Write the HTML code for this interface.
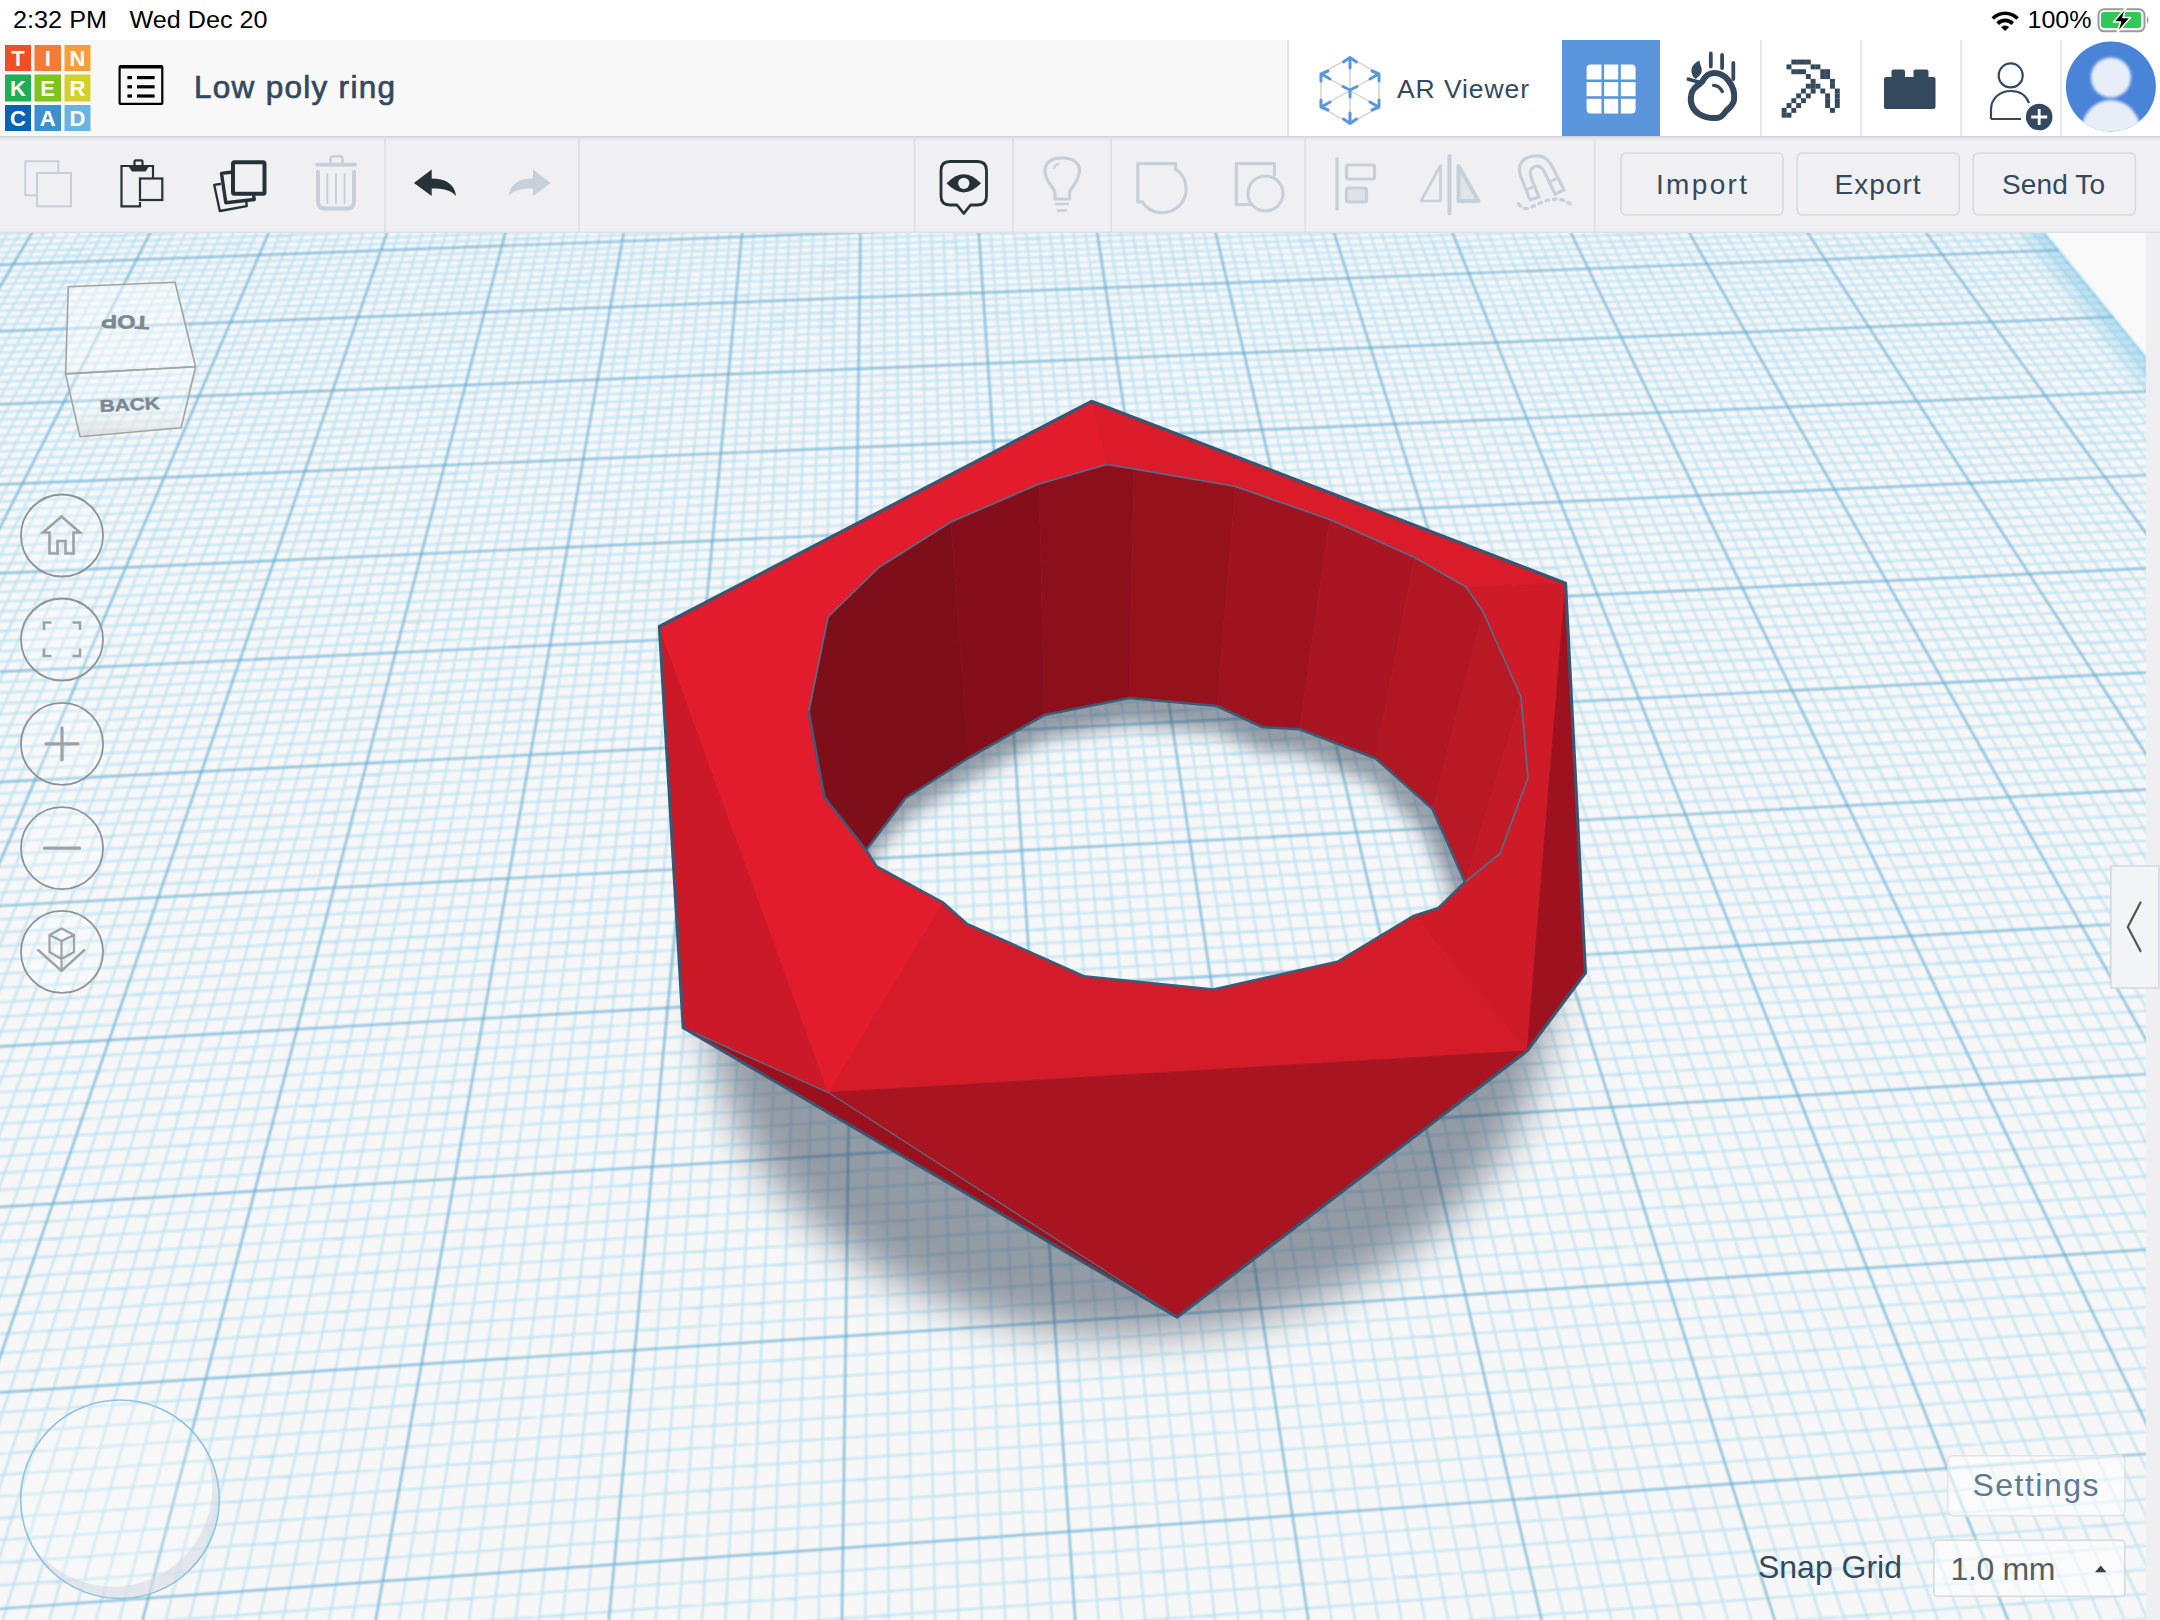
<!DOCTYPE html>
<html><head><meta charset="utf-8">
<style>
*{box-sizing:border-box;margin:0;padding:0}
html,body{width:2160px;height:1620px;overflow:hidden;background:#fff;font-family:"Liberation Sans",sans-serif}
svg{position:absolute;left:0;top:0}
</style></head><body>
<svg id="scene" width="2160" height="1620" viewBox="0 0 2160 1620">
 <defs>
  <clipPath id="vp"><rect x="0" y="233" width="2146" height="1387"/></clipPath>
  <filter id="blurO" x="-30%" y="-30%" width="160%" height="160%"><feGaussianBlur stdDeviation="20"/></filter>
  <filter id="blurI" x="-30%" y="-30%" width="160%" height="160%"><feGaussianBlur stdDeviation="9"/></filter>
  <filter id="soft" filterUnits="userSpaceOnUse" x="0" y="233" width="2160" height="1387"><feGaussianBlur stdDeviation="1.0"/></filter>
  <mask id="shmask" maskUnits="userSpaceOnUse" x="0" y="233" width="2160" height="1387">
   <ellipse cx="1128" cy="1000" rx="420" ry="335" fill="#fff" filter="url(#blurO)"/>
   <path d="M872 856 L909.5 816 L968.3 780 L1044.5 739 L1129.2 724 L1216.7 732 L1262 751 L1299.5 753.2 L1373.8 782.5 L1422.5 831 L1451 890 L1440 1100 L880 1100Z" fill="#000" filter="url(#blurI)"/>
  </mask>
  <linearGradient id="band" gradientUnits="userSpaceOnUse" x1="2137.4" y1="391.7" x2="2173" y2="390.2">
   <stop offset="0" stop-color="#4fb3de" stop-opacity="0"/><stop offset="1" stop-color="#4fb3de" stop-opacity="0.4"/>
  </linearGradient>
 </defs>
 <g clip-path="url(#vp)">
  <rect x="0" y="233" width="2160" height="1387" fill="#f9f9f9"/>
  <polygon points="23.3,-179.4 1673.5,-223.1 3385.2,1878.8 -2105.5,2353.9" fill="#f7f7f7"/>
  <g filter="url(#soft)">
  <path d="M32 -179.7L-2073.9 2351.1M40.6 -179.9L-2042.3 2348.4M49.2 -180.1L-2010.7 2345.7M57.8 -180.3L-1979.2 2342.9M66.4 -180.6L-1947.8 2340.2M75 -180.8L-1916.4 2337.5M83.6 -181L-1885 2334.8M92.1 -181.2L-1853.7 2332.1M100.7 -181.5L-1822.4 2329.4M117.9 -181.9L-1760.1 2324M126.4 -182.2L-1728.9 2321.3M135 -182.4L-1697.9 2318.6M143.6 -182.6L-1666.8 2315.9M152.1 -182.8L-1635.9 2313.2M160.7 -183.1L-1604.9 2310.6M169.2 -183.3L-1574 2307.9M177.8 -183.5L-1543.2 2305.2M186.3 -183.7L-1512.4 2302.6M203.4 -184.2L-1451 2297.2M212 -184.4L-1420.3 2294.6M220.5 -184.6L-1389.7 2291.9M229 -184.9L-1359.2 2289.3M237.5 -185.1L-1328.7 2286.7M246 -185.3L-1298.2 2284M254.6 -185.5L-1267.8 2281.4M263.1 -185.8L-1237.4 2278.8M271.6 -186L-1207.1 2276.1M288.6 -186.4L-1146.6 2270.9M297.1 -186.7L-1116.4 2268.3M305.6 -186.9L-1086.2 2265.7M314.1 -187.1L-1056.1 2263.1M322.5 -187.3L-1026.1 2260.5M331 -187.6L-996 2257.9M339.5 -187.8L-966.1 2255.3M348 -188L-936.2 2252.7M356.5 -188.2L-906.3 2250.1M373.4 -188.7L-846.7 2245M381.8 -188.9L-816.9 2242.4M390.3 -189.1L-787.2 2239.8M398.7 -189.4L-757.6 2237.3M407.2 -189.6L-728 2234.7M415.6 -189.8L-698.4 2232.1M424.1 -190L-668.9 2229.6M432.5 -190.3L-639.4 2227M440.9 -190.5L-609.9 2224.5M457.8 -190.9L-551.2 2219.4M466.2 -191.1L-521.9 2216.9M474.6 -191.4L-492.6 2214.3M483.1 -191.6L-463.4 2211.8M491.5 -191.8L-434.2 2209.3M499.9 -192L-405.1 2206.8M508.3 -192.3L-376 2204.2M516.7 -192.5L-347 2201.7M525.1 -192.7L-318 2199.2M541.9 -193.1L-260.1 2194.2M550.2 -193.4L-231.2 2191.7M558.6 -193.6L-202.4 2189.2M567 -193.8L-173.6 2186.7M575.4 -194L-144.8 2184.2M583.8 -194.3L-116.1 2181.8M592.1 -194.5L-87.4 2179.3M600.5 -194.7L-58.8 2176.8M608.8 -194.9L-30.2 2174.3M625.6 -195.4L26.8 2169.4M633.9 -195.6L55.3 2166.9M642.3 -195.8L83.7 2164.5M650.6 -196L112.1 2162M658.9 -196.2L140.4 2159.6M667.3 -196.5L168.7 2157.1M675.6 -196.7L197 2154.7M683.9 -196.9L225.2 2152.2M692.2 -197.1L253.3 2149.8M708.9 -197.6L309.6 2144.9M717.2 -197.8L337.6 2142.5M725.5 -198L365.6 2140.1M733.8 -198.2L393.6 2137.7M742.1 -198.4L421.5 2135.2M750.4 -198.7L449.4 2132.8M758.7 -198.9L477.2 2130.4M767 -199.1L505.1 2128M775.3 -199.3L532.8 2125.6M791.9 -199.8L588.2 2120.8M800.1 -200L615.9 2118.4M808.4 -200.2L643.5 2116M816.7 -200.4L671.1 2113.7M824.9 -200.6L698.6 2111.3M833.2 -200.9L726.1 2108.9M841.5 -201.1L753.5 2106.5M849.7 -201.3L780.9 2104.1M858 -201.5L808.3 2101.8M874.5 -201.9L862.9 2097.1M882.7 -202.2L890.2 2094.7M891 -202.4L917.4 2092.3M899.2 -202.6L944.6 2090M907.4 -202.8L971.7 2087.6M915.6 -203L998.8 2085.3M923.9 -203.2L1025.9 2083M932.1 -203.5L1052.9 2080.6M940.3 -203.7L1079.9 2078.3M956.7 -204.1L1133.8 2073.6M964.9 -204.3L1160.6 2071.3M973.1 -204.6L1187.5 2069M981.3 -204.8L1214.3 2066.7M989.5 -205L1241 2064.3M997.7 -205.2L1267.7 2062M1005.9 -205.4L1294.4 2059.7M1014.1 -205.6L1321.1 2057.4M1022.3 -205.9L1347.7 2055.1M1038.6 -206.3L1400.8 2050.5M1046.8 -206.5L1427.3 2048.2M1055 -206.7L1453.7 2045.9M1063.1 -206.9L1480.2 2043.7M1071.3 -207.1L1506.5 2041.4M1079.5 -207.4L1532.9 2039.1M1087.6 -207.6L1559.2 2036.8M1095.8 -207.8L1585.5 2034.5M1103.9 -208L1611.7 2032.3M1120.2 -208.4L1664.1 2027.7M1128.3 -208.7L1690.2 2025.5M1136.5 -208.9L1716.3 2023.2M1144.6 -209.1L1742.3 2021M1152.7 -209.3L1768.4 2018.7M1160.8 -209.5L1794.3 2016.5M1169 -209.7L1820.3 2014.2M1177.1 -209.9L1846.2 2012M1185.2 -210.2L1872.1 2009.7M1201.4 -210.6L1923.7 2005.3M1209.5 -210.8L1949.5 2003M1217.6 -211L1975.2 2000.8M1225.7 -211.2L2000.9 1998.6M1233.8 -211.4L2026.6 1996.4M1241.9 -211.7L2052.2 1994.2M1250 -211.9L2077.8 1991.9M1258 -212.1L2103.3 1989.7M1266.1 -212.3L2128.8 1987.5M1282.3 -212.7L2179.8 1983.1M1290.3 -212.9L2205.2 1980.9M1298.4 -213.2L2230.6 1978.7M1306.4 -213.4L2255.9 1976.5M1314.5 -213.6L2281.2 1974.3M1322.6 -213.8L2306.5 1972.2M1330.6 -214L2331.7 1970M1338.7 -214.2L2356.9 1967.8M1346.7 -214.4L2382.1 1965.6M1362.8 -214.9L2432.3 1961.3M1370.8 -215.1L2457.4 1959.1M1378.8 -215.3L2482.4 1956.9M1386.9 -215.5L2507.4 1954.8M1394.9 -215.7L2532.4 1952.6M1402.9 -215.9L2557.3 1950.5M1410.9 -216.1L2582.2 1948.3M1418.9 -216.3L2607.1 1946.2M1426.9 -216.6L2631.9 1944M1442.9 -217L2681.5 1939.7M1450.9 -217.2L2706.2 1937.6M1458.9 -217.4L2730.9 1935.4M1466.9 -217.6L2755.6 1933.3M1474.9 -217.8L2780.2 1931.2M1482.9 -218L2804.8 1929.1M1490.9 -218.2L2829.3 1926.9M1498.9 -218.5L2853.9 1924.8M1506.8 -218.7L2878.4 1922.7M1522.8 -219.1L2927.3 1918.5M1530.7 -219.3L2951.7 1916.3M1538.7 -219.5L2976 1914.2M1546.7 -219.7L3000.3 1912.1M1554.6 -219.9L3024.6 1910M1562.6 -220.1L3048.9 1907.9M1570.5 -220.4L3073.1 1905.8M1578.5 -220.6L3097.3 1903.7M1586.4 -220.8L3121.5 1901.6M1602.3 -221.2L3169.7 1897.5M1610.2 -221.4L3193.8 1895.4M1618.1 -221.6L3217.8 1893.3M1626.1 -221.8L3241.9 1891.2M1634 -222L3265.8 1889.2M1641.9 -222.2L3289.8 1887.1M1649.8 -222.5L3313.7 1885M1657.7 -222.7L3337.6 1883M1665.6 -222.9L3361.4 1880.9M1673.5 -223.1L3385.2 1878.8M20.7 -176.3L1675.9 -220.2M18 -173.1L1678.3 -217.3M15.3 -169.9L1680.7 -214.3M12.6 -166.6L1683.1 -211.4M9.9 -163.4L1685.5 -208.4M7.1 -160.1L1688 -205.4M4.4 -156.8L1690.4 -202.4M1.6 -153.5L1692.9 -199.3M-1.2 -150.2L1695.4 -196.3M-6.9 -143.4L1700.4 -190.1M-9.7 -140.1L1702.9 -187M-12.6 -136.6L1705.4 -183.9M-15.5 -133.2L1708 -180.8M-18.4 -129.7L1710.6 -177.6M-21.3 -126.2L1713.2 -174.4M-24.3 -122.7L1715.8 -171.2M-27.3 -119.2L1718.4 -168M-30.2 -115.6L1721 -164.8M-36.3 -108.5L1726.4 -158.2M-39.3 -104.8L1729.1 -154.9M-42.4 -101.2L1731.8 -151.6M-45.5 -97.5L1734.5 -148.2M-48.6 -93.8L1737.2 -144.9M-51.7 -90.1L1740 -141.5M-54.9 -86.3L1742.8 -138.1M-58 -82.6L1745.6 -134.6M-61.2 -78.8L1748.4 -131.2M-67.7 -71.1L1754.1 -124.2M-71 -67.2L1756.9 -120.7M-74.2 -63.3L1759.8 -117.1M-77.5 -59.4L1762.7 -113.6M-80.9 -55.4L1765.7 -110M-84.2 -51.4L1768.6 -106.3M-87.6 -47.4L1771.6 -102.7M-91 -43.3L1774.6 -99M-94.4 -39.3L1777.6 -95.3M-101.3 -31L1783.6 -87.9M-104.8 -26.9L1786.7 -84.1M-108.4 -22.7L1789.8 -80.3M-111.9 -18.5L1792.9 -76.5M-115.5 -14.2L1796 -72.7M-119.1 -9.9L1799.2 -68.8M-122.7 -5.6L1802.4 -64.9M-126.4 -1.3L1805.6 -61M-130 3.1L1808.8 -57M-137.5 11.9L1815.3 -49M-141.2 16.4L1818.6 -45M-145 20.9L1821.9 -40.9M-148.8 25.5L1825.2 -36.8M-152.7 30L1828.6 -32.7M-156.6 34.7L1832 -28.5M-160.5 39.3L1835.4 -24.4M-164.4 44L1838.8 -20.2M-168.3 48.7L1842.3 -15.9M-176.4 58.2L1849.2 -7.3M-180.4 63L1852.8 -3M-184.5 67.9L1856.3 1.4M-188.6 72.8L1859.9 5.8M-192.8 77.7L1863.5 10.2M-196.9 82.7L1867.1 14.7M-201.2 87.7L1870.8 19.2M-205.4 92.8L1874.5 23.7M-209.7 97.9L1878.2 28.3M-218.3 108.2L1885.7 37.5M-222.7 113.4L1889.5 42.2M-227.1 118.7L1893.4 46.9M-231.6 124L1897.2 51.6M-236.1 129.3L1901.1 56.4M-240.6 134.7L1905 61.2M-245.2 140.1L1909 66M-249.8 145.6L1913 70.9M-254.4 151.1L1917 75.8M-263.8 162.3L1925.1 85.8M-268.6 167.9L1929.2 90.9M-273.4 173.6L1933.3 95.9M-278.2 179.4L1937.5 101.1M-283.1 185.2L1941.7 106.2M-288 191L1945.9 111.4M-292.9 196.9L1950.2 116.7M-297.9 202.9L1954.5 122M-303 208.9L1958.9 127.3M-313.2 221L1967.6 138.1M-318.4 227.2L1972.1 143.5M-323.6 233.4L1976.6 149M-328.8 239.7L1981.1 154.6M-334.2 246L1985.7 160.2M-339.5 252.4L1990.2 165.8M-344.9 258.8L1994.9 171.5M-350.4 265.3L1999.6 177.3M-355.9 271.9L2004.3 183M-367 285.1L2013.8 194.8M-372.7 291.9L2018.6 200.7M-378.4 298.6L2023.5 206.7M-384.2 305.5L2028.4 212.7M-390 312.4L2033.4 218.8M-395.8 319.4L2038.4 225M-401.7 326.4L2043.4 231.1M-407.7 333.5L2048.5 237.4M-413.7 340.7L2053.7 243.7M-426 355.3L2064.1 256.5M-432.2 362.6L2069.3 263M-438.4 370.1L2074.7 269.5M-444.8 377.6L2080 276.1M-451.1 385.2L2085.4 282.7M-457.6 392.9L2090.9 289.4M-464.1 400.6L2096.4 296.2M-470.7 408.4L2102 303M-477.3 416.3L2107.6 309.9M-490.8 432.4L2119 323.9M-497.6 440.5L2124.8 331M-504.5 448.7L2130.6 338.2M-511.5 457L2136.5 345.4M-518.5 465.4L2142.4 352.7M-525.6 473.8L2148.4 360M-532.8 482.4L2154.5 367.5M-540.1 491L2160.6 375M-547.4 499.8L2166.7 382.5M-562.3 517.5L2179.2 397.9M-569.9 526.5L2185.6 405.7M-577.5 535.6L2192 413.6M-585.3 544.8L2198.5 421.5M-593.1 554.1L2205 429.6M-601 563.5L2211.6 437.7M-609 573L2218.3 445.9M-617 582.6L2225 454.1M-625.2 592.3L2231.8 462.5M-641.8 612L2245.7 479.5M-650.2 622.1L2252.7 488.1M-658.7 632.2L2259.8 496.8M-667.3 642.5L2266.9 505.6M-676 652.8L2274.2 514.5M-684.9 663.3L2281.5 523.5M-693.8 673.9L2288.9 532.5M-702.8 684.7L2296.3 541.7M-711.9 695.5L2303.9 551M-730.5 717.6L2319.2 569.8M-739.9 728.8L2327 579.4M-749.5 740.2L2334.9 589.1M-759.1 751.7L2342.9 598.8M-768.9 763.3L2350.9 608.7M-778.8 775.1L2359.1 618.7M-788.8 787.1L2367.3 628.8M-799 799.1L2375.6 639.1M-809.2 811.3L2384.1 649.4M-830.1 836.2L2401.2 670.4M-840.8 848.9L2409.9 681.1M-851.6 861.7L2418.7 692M-862.5 874.7L2427.6 702.9M-873.6 887.9L2436.6 714M-884.8 901.2L2445.7 725.2M-896.1 914.7L2455 736.5M-907.6 928.4L2464.3 748M-919.3 942.3L2473.8 759.6M-943 970.5L2493 783.2M-955.1 984.9L2502.8 795.2M-967.4 999.5L2512.7 807.4M-979.8 1014.3L2522.8 819.8M-992.4 1029.3L2532.9 832.2M-1005.2 1044.5L2543.2 844.9M-1018.2 1059.9L2553.6 857.7M-1031.3 1075.6L2564.2 870.6M-1044.6 1091.4L2574.9 883.7M-1071.8 1123.8L2596.6 910.5M-1085.7 1140.3L2607.7 924.1M-1099.8 1157.1L2619 937.9M-1114.1 1174.1L2630.4 951.9M-1128.6 1191.3L2641.9 966.1M-1143.3 1208.8L2653.6 980.4M-1158.2 1226.6L2665.5 995M-1173.4 1244.6L2677.5 1009.7M-1188.7 1262.9L2689.7 1024.7M-1220.2 1300.4L2714.5 1055.2M-1236.3 1319.5L2727.2 1070.8M-1252.6 1339L2740 1086.6M-1269.2 1358.7L2753.1 1102.6M-1286.1 1378.8L2766.3 1118.8M-1303.2 1399.1L2779.7 1135.3M-1320.6 1419.8L2793.3 1152M-1338.2 1440.9L2807.1 1168.9M-1356.2 1462.2L2821.1 1186.1M-1393 1506L2849.7 1221.3M-1411.9 1528.5L2864.4 1239.2M-1431 1551.3L2879.2 1257.4M-1450.5 1574.5L2894.3 1276M-1470.4 1598.1L2909.6 1294.7M-1490.5 1622.1L2925.1 1313.8M-1511.1 1646.5L2940.9 1333.2M-1531.9 1671.3L2956.9 1352.8M-1553.2 1696.6L2973.2 1372.8M-1596.8 1748.6L3006.5 1413.7M-1619.2 1775.2L3023.5 1434.7M-1642.1 1802.4L3040.9 1456M-1665.3 1830L3058.5 1477.6M-1689 1858.2L3076.4 1499.6M-1713.1 1886.9L3094.6 1521.9M-1737.7 1916.2L3113.1 1544.7M-1762.7 1946L3131.9 1567.8M-1788.2 1976.3L3151 1591.3M-1840.8 2038.9L3190.3 1639.5M-1867.9 2071.1L3210.5 1664.2M-1895.5 2104L3231 1689.4M-1923.7 2137.5L3251.8 1715M-1952.4 2171.7L3273.1 1741.1M-1981.8 2206.6L3294.7 1767.6M-2011.7 2242.3L3316.7 1794.7M-2042.3 2278.7L3339.1 1822.2M-2073.6 2315.9L3362 1850.3" stroke="#b5dff1" stroke-width="1.75" fill="none"/>
  <path d="M23.3 -179.4L-2105.5 2353.9M109.3 -181.7L-1791.2 2326.7M194.9 -184L-1481.7 2299.9M280.1 -186.2L-1176.8 2273.5M364.9 -188.5L-876.5 2247.5M449.4 -190.7L-580.5 2221.9M533.5 -192.9L-289 2196.7M617.2 -195.1L-1.7 2171.9M700.6 -197.3L281.5 2147.4M783.6 -199.5L560.5 2123.2M866.2 -201.7L835.6 2099.4M948.5 -203.9L1106.9 2076M1030.5 -206.1L1374.2 2052.8M1112.1 -208.2L1637.9 2030M1193.3 -210.4L1897.9 2007.5M1274.2 -212.5L2154.3 1985.3M1354.7 -214.6L2407.2 1963.4M1434.9 -216.8L2656.7 1941.9M1514.8 -218.9L2902.8 1920.6M1594.3 -221L3145.6 1899.6M23.3 -179.4L1673.5 -223.1M-4 -146.8L1697.8 -193.2M-33.3 -112.1L1723.7 -161.5M-64.5 -74.9L1751.2 -127.7M-97.9 -35.2L1780.6 -91.6M-133.7 7.5L1812 -53M-172.3 53.4L1845.7 -11.6M-214 103L1882 32.9M-259.1 156.7L1921 80.8M-308.1 214.9L1963.2 132.7M-361.4 278.5L2009 188.9M-419.8 347.9L2058.8 250.1M-484 424.3L2113.3 316.9M-554.8 508.6L2173 390.2M-633.4 602.1L2238.7 470.9M-721.1 706.5L2311.5 560.3M-819.6 823.7L2392.6 659.9M-931 956.3L2483.3 771.3M-1058.1 1107.5L2585.7 897M-1204.3 1281.5L2702 1039.8M-1374.5 1483.9L2835.3 1203.6M-1574.8 1722.4L2989.7 1393.1M-1814.3 2007.3L3170.5 1615.2M-2105.5 2353.9L3385.2 1878.8" stroke="#5aa9d1" stroke-width="1.7" fill="none"/>
  </g>
  <polygon points="1649.8,-222.5 1652.8,-222.5 3322.6,1884.2 3313.7,1885" fill="#5ab8e0" fill-opacity="0.020"/><polygon points="1652.8,-222.5 1655.8,-222.6 3331.6,1883.5 3322.6,1884.2" fill="#5ab8e0" fill-opacity="0.067"/><polygon points="1655.8,-222.6 1658.7,-222.7 3340.5,1882.7 3331.6,1883.5" fill="#5ab8e0" fill-opacity="0.117"/><polygon points="1658.7,-222.7 1661.7,-222.8 3349.5,1881.9 3340.5,1882.7" fill="#5ab8e0" fill-opacity="0.169"/><polygon points="1661.7,-222.8 1664.7,-222.8 3358.4,1881.2 3349.5,1881.9" fill="#5ab8e0" fill-opacity="0.223"/><polygon points="1664.7,-222.8 1667.6,-222.9 3367.4,1880.4 3358.4,1881.2" fill="#5ab8e0" fill-opacity="0.278"/><polygon points="1667.6,-222.9 1670.6,-223 3376.3,1879.6 3367.4,1880.4" fill="#5ab8e0" fill-opacity="0.334"/><polygon points="1670.6,-223 1673.5,-223.1 3385.2,1878.8 3376.3,1879.6" fill="#5ab8e0" fill-opacity="0.391"/>
  <rect x="0" y="233" width="2160" height="1387" fill="rgb(38,55,75)" fill-opacity="0.48" mask="url(#shmask)"/>
  <g>
<polygon points="659.4,626.5 683.2,1027.6 828.5,1092.6" fill="#cc1927" stroke="#cc1927" stroke-width="0.8"/>
<polygon points="1091.5,401.3 1107,464.5 1039,484 951,522 878.8,567.5 828,617 808.8,711.5 824.3,797 866,850 876.5,866.5 942.7,902.3 828.5,1092.6 659.4,626.5" fill="#e31c2d" stroke="#e31c2d" stroke-width="0.8"/>
<polygon points="1091.5,401.3 1565.5,583.2 1466,587 1414.8,557.5 1329.8,519.5 1235.5,486.5 1134,468.8 1107,464.5" fill="#da1b2a" stroke="#da1b2a" stroke-width="0.8"/>
<polygon points="1565.5,583.2 1527.2,1050.8 1413.3,916 1438.5,908 1465,882 1500,853.5 1528,778 1521,697 1483,611.5 1466,587" fill="#cf1a28" stroke="#cf1a28" stroke-width="0.8"/>
<polygon points="1565.5,583.2 1585.4,972.7 1527.2,1050.8" fill="#9e1220" stroke="#9e1220" stroke-width="0.8"/>
<polygon points="828.5,1092.6 942.7,902.3 967,924 1083.8,976.2 1213.5,989.5 1337.5,961.8 1413.3,916 1527.2,1050.8" fill="#d31b2a" stroke="#d31b2a" stroke-width="0.8"/>
<polygon points="828.5,1092.6 1527.2,1050.8 1177.3,1317.1" fill="#a8141f" stroke="#a8141f" stroke-width="0.8"/>
<polygon points="683.2,1027.6 1177.3,1317.1 828.5,1092.6" fill="#9a111d" stroke="#9a111d" stroke-width="0.8"/>
<polygon points="866,850 824.3,797 808.8,711.5 828,617 878.8,567.5 951,522 968.3,758 905.5,798" fill="#7e0f18" stroke="#7e0f18" stroke-width="0.8"/>
<polygon points="951,522 1039,484 1044.5,715 968.3,758" fill="#840f1a" stroke="#840f1a" stroke-width="0.8"/>
<polygon points="1039,484 1107,464.5 1134,468.8 1129.2,698 1044.5,715" fill="#8b101b" stroke="#8b101b" stroke-width="0.8"/>
<polygon points="1134,468.8 1235.5,486.5 1216.7,706 1129.2,698" fill="#95121d" stroke="#95121d" stroke-width="0.8"/>
<polygon points="1235.5,486.5 1329.8,519.5 1299.5,729.2 1262,727 1216.7,706" fill="#9f1320" stroke="#9f1320" stroke-width="0.8"/>
<polygon points="1329.8,519.5 1414.8,557.5 1375.8,758.5 1299.5,729.2" fill="#a91522" stroke="#a91522" stroke-width="0.8"/>
<polygon points="1414.8,557.5 1466,587 1483,611.5 1432.5,809 1375.8,758.5" fill="#b11623" stroke="#b11623" stroke-width="0.8"/>
<polygon points="1483,611.5 1521,697 1465,882 1432.5,809" fill="#b91825" stroke="#b91825" stroke-width="0.8"/>
<polygon points="1521,697 1528,778 1500,853.5 1465,882" fill="#c21a27" stroke="#c21a27" stroke-width="0.8"/>
  </g>
  <polyline points="683.2,1027.6 828.5,1092.6 1177.3,1317.1" fill="none" stroke="#5b7088" stroke-width="1.2"/>
  <polyline points="808.8,711.5 828,617 878.8,567.5 951,522 1039,484 1107,464.5 1134,468.8 1235.5,486.5 1329.8,519.5 1414.8,557.5 1466,587 1483,611.5 1521,697 1528,778 1500,853.5 1465,882" fill="none" stroke="#566f88" stroke-width="1.7" stroke-linejoin="round"/>
  <polyline points="1465,882 1438.5,908 1413.3,916 1337.5,961.8 1213.5,989.5 1083.8,976.2 967,924 942.7,902.3 876.5,866.5 866,850 824.3,797 808.8,711.5" fill="none" stroke="#3f5a74" stroke-width="2.6" stroke-linejoin="round"/>
  <polyline points="866,850 905.5,798 968.3,758 1044.5,715 1129.2,698 1216.7,706 1262,727 1299.5,729.2 1375.8,758.5 1432.5,809 1465,882" fill="none" stroke="#3f5a74" stroke-width="2.6" stroke-linejoin="round"/>
  <polygon points="1091.5,401.3 1565.5,583.2 1585.4,972.7 1527.2,1050.8 1177.3,1317.1 683.2,1027.6 659.4,626.5" fill="none" stroke="#3b5670" stroke-width="3.2" stroke-linejoin="round"/>
 </g>
 <rect x="2146" y="233" width="14" height="1387" fill="#efeff2"/>
</svg>

<svg id="ui" width="2160" height="1620" viewBox="0 0 2160 1620" font-family="Liberation Sans, sans-serif">
 <defs>
  <linearGradient id="hsh" x1="0" y1="0" x2="0" y2="1"><stop offset="0" stop-color="#ccd1d8"/><stop offset="1" stop-color="#f0f0f3" stop-opacity="0"/></linearGradient>
  <linearGradient id="cubeg" x1="0" y1="0" x2="0" y2="1"><stop offset="0" stop-color="#fff" stop-opacity="0.35"/><stop offset="0.55" stop-color="#fff" stop-opacity="0.25"/><stop offset="1" stop-color="#d8d8d8" stop-opacity="0.75"/></linearGradient>
  <filter id="avblur"><feGaussianBlur stdDeviation="1.6"/></filter>
  <clipPath id="avclip"><circle cx="2110.9" cy="86.5" r="45"/></clipPath>
 </defs>
 <!-- status bar -->
 <rect x="0" y="0" width="2160" height="40" fill="#fff"/>
 <text x="13" y="27.8" font-size="23" textLength="94" lengthAdjust="spacingAndGlyphs" fill="#000">2:32 PM</text>
 <text x="129.5" y="27.8" font-size="23" textLength="138" lengthAdjust="spacingAndGlyphs" fill="#000">Wed Dec 20</text>
 <text x="2027.5" y="27.8" font-size="23" textLength="64" lengthAdjust="spacingAndGlyphs" fill="#000">100%</text>
 <g fill="#000">
  <path d="M1991.5 17.2 A19 19 0 0 1 2018.8 17.2 L2016.3 19.8 A15.5 15.5 0 0 0 1994 19.8 Z"/>
  <path d="M1996.3 22.2 A12.5 12.5 0 0 1 2014 22.2 L2011.3 24.9 A8.7 8.7 0 0 0 1999 24.9 Z"/>
  <path d="M2001 27 A6 6 0 0 1 2009.2 27 L2005.1 31 Z"/>
 </g>
 <rect x="2098.5" y="9.3" width="46" height="22" rx="5.5" fill="none" stroke="#9a9a9a" stroke-width="2"/>
 <path d="M2147 16 Q2150 20 2147 24 Z" fill="#9a9a9a"/>
 <rect x="2101" y="12" width="40.2" height="16" rx="3" fill="#32c759"/>
 <path d="M2126 7.5 L2113.5 22 L2120.5 22 L2117 33 L2130.5 17.5 L2123 17.5 Z" fill="#000" stroke="#fff" stroke-width="1.6" stroke-linejoin="round"/>

 <!-- header -->
 <rect x="0" y="40" width="1288" height="96" fill="#f8f8f8"/>
 <rect x="1288" y="40" width="872" height="96" fill="#fff"/>
 <rect x="1287.3" y="40" width="1.6" height="96" fill="#dde1e6"/>
 <g font-weight="bold" font-size="22" fill="#fff" text-anchor="middle">
  <rect x="5" y="45" width="26" height="26" fill="#f04e23"/><text x="18" y="66">T</text>
  <rect x="34.5" y="45" width="26.5" height="26" fill="#f47b37"/><text x="47.7" y="66">I</text>
  <rect x="64.5" y="45" width="26" height="26" fill="#f99d36"/><text x="77.5" y="66">N</text>
  <rect x="5" y="74.5" width="26" height="27" fill="#1fae56"/><text x="18" y="96">K</text>
  <rect x="34.5" y="74.5" width="26.5" height="27" fill="#7dc41b"/><text x="47.7" y="96">E</text>
  <rect x="64.5" y="74.5" width="26" height="27" fill="#d3d02a"/><text x="77.5" y="96">R</text>
  <rect x="5" y="105" width="26" height="26" fill="#0a62b4"/><text x="18" y="126">C</text>
  <rect x="34.5" y="105" width="26.5" height="26" fill="#3e8fcd"/><text x="47.7" y="126">A</text>
  <rect x="64.5" y="105" width="26" height="26" fill="#6ab3de"/><text x="77.5" y="126">D</text>
 </g>
 <rect x="119.6" y="66" width="42.7" height="37.9" rx="1.5" fill="none" stroke="#000" stroke-width="2.2"/>
 <rect x="119.6" y="65" width="42.7" height="3.5" fill="#000"/>
 <g fill="#000">
  <rect x="127.4" y="76" width="4.6" height="3.2"/><rect x="137" y="76" width="17.6" height="3.2"/>
  <rect x="127.4" y="85.2" width="4.6" height="3.2"/><rect x="137" y="85.2" width="17.6" height="3.2"/>
  <rect x="127.4" y="94.4" width="4.6" height="3.2"/><rect x="137" y="94.4" width="17.6" height="3.2"/>
 </g>
 <text x="194" y="98" font-size="31.5" textLength="201" lengthAdjust="spacing" fill="#34495e" stroke="#34495e" stroke-width="0.7">Low poly ring</text>

 <!-- AR viewer -->
 <g stroke="#cfcfcf" stroke-width="1.4" fill="none">
  <polygon points="1350,57.5 1379,74 1379,107 1350,123.5 1321,107 1321,74"/>
  <line x1="1350" y1="57.5" x2="1350" y2="123.5"/><line x1="1321" y1="74" x2="1379" y2="107"/><line x1="1379" y1="74" x2="1321" y2="107"/>
 </g>
 <g stroke="#5b95db" stroke-width="3" fill="none" stroke-linecap="round" stroke-linejoin="round">
  <path d="M1343.5 62 L1350 57.5 L1356.5 62 M1350 58 V68"/>
  <path d="M1343.5 119 L1350 123.5 L1356.5 119 M1350 123 V113"/>
  <path d="M1321 81 V74 L1328 71 M1321.5 74 L1330 79"/>
  <path d="M1379 81 V74 L1372 71 M1378.5 74 L1370 79"/>
  <path d="M1321 100 V107 L1328 110 M1321.5 107 L1330 102"/>
  <path d="M1379 100 V107 L1372 110 M1378.5 107 L1370 102"/>
  <path d="M1343 86.5 L1350 90 L1357 86.5 M1350 90 V97"/>
 </g>
 <text x="1397" y="97.7" font-size="26.5" textLength="132" lengthAdjust="spacing" fill="#34495e">AR Viewer</text>
 <rect x="1562" y="40" width="98" height="96" fill="#5b96dc"/>
 <rect x="1586.6" y="64.5" width="49" height="49" rx="4" fill="#fff"/>
 <g fill="#5b96dc"><rect x="1601.5" y="64" width="2.6" height="50"/><rect x="1618.2" y="64" width="2.6" height="50"/><rect x="1586" y="79.5" width="50" height="2.6"/><rect x="1586" y="96.2" width="50" height="2.6"/></g>
 <g fill="#dde1e6"><rect x="1760.2" y="40" width="1.5" height="96"/><rect x="1860.2" y="40" width="1.5" height="96"/><rect x="1960.3" y="40" width="1.5" height="96"/><rect x="2060.3" y="40" width="1.5" height="96"/></g>
 <!-- apple -->
 <g fill="none" stroke="#34495e" stroke-linecap="round" stroke-linejoin="round">
  <path d="M1702 82 C1697 86 1691.5 89 1691 96 C1690 104 1693 110 1699 114 C1704 117 1711 118.5 1717 118 C1722 117.5 1724 114 1726 111 C1729 108 1733 106 1734 100 C1735 93 1733 86 1728 80 C1724 75 1719 73 1714 73 C1709 73 1705 76 1702 82 Z" stroke-width="6"/>
  <path d="M1688.3 79.2 L1700.5 82.5" stroke-width="3.6"/>
  <path d="M1713.5 85.4 C1717 85.5 1720.5 88 1722.3 91.5" stroke-width="3.4"/>
  <path d="M1710.8 53.5 V66.5 M1722.1 55 V68 M1733.3 63 V79" stroke-width="3.8"/>
 </g>
 <path d="M1699.3 60.5 C1694 63 1691 67 1691.5 72 C1692 76 1694 78 1695.8 79 C1699 76.5 1701.8 74 1701.8 70 C1701.8 67 1700 64.5 1699.3 60.5 Z" fill="#34495e"/>
 <!-- pickaxe -->
 <g fill="#34495e"><rect x="1800.99" y="69.24" width="4.95" height="4.95"/><rect x="1791.33" y="59.58" width="4.95" height="4.95"/><rect x="1796.16" y="59.58" width="4.95" height="4.95"/><rect x="1800.99" y="59.58" width="4.95" height="4.95"/><rect x="1805.82" y="59.58" width="4.95" height="4.95"/><rect x="1786.50" y="64.41" width="4.95" height="4.95"/><rect x="1810.65" y="64.41" width="4.95" height="4.95"/><rect x="1815.48" y="64.41" width="4.95" height="4.95"/><rect x="1791.33" y="69.24" width="4.95" height="4.95"/><rect x="1796.16" y="69.24" width="4.95" height="4.95"/><rect x="1820.31" y="69.24" width="4.95" height="4.95"/><rect x="1825.14" y="69.24" width="4.95" height="4.95"/><rect x="1805.82" y="74.07" width="4.95" height="4.95"/><rect x="1820.31" y="74.07" width="4.95" height="4.95"/><rect x="1825.14" y="74.07" width="4.95" height="4.95"/><rect x="1810.65" y="78.90" width="4.95" height="4.95"/><rect x="1829.97" y="78.90" width="4.95" height="4.95"/><rect x="1805.82" y="83.73" width="4.95" height="4.95"/><rect x="1810.65" y="83.73" width="4.95" height="4.95"/><rect x="1815.48" y="83.73" width="4.95" height="4.95"/><rect x="1829.97" y="83.73" width="4.95" height="4.95"/><rect x="1800.99" y="88.56" width="4.95" height="4.95"/><rect x="1810.65" y="88.56" width="4.95" height="4.95"/><rect x="1820.31" y="88.56" width="4.95" height="4.95"/><rect x="1834.80" y="88.56" width="4.95" height="4.95"/><rect x="1796.16" y="93.39" width="4.95" height="4.95"/><rect x="1805.82" y="93.39" width="4.95" height="4.95"/><rect x="1825.14" y="93.39" width="4.95" height="4.95"/><rect x="1834.80" y="93.39" width="4.95" height="4.95"/><rect x="1791.33" y="98.22" width="4.95" height="4.95"/><rect x="1800.99" y="98.22" width="4.95" height="4.95"/><rect x="1825.14" y="98.22" width="4.95" height="4.95"/><rect x="1834.80" y="98.22" width="4.95" height="4.95"/><rect x="1786.50" y="103.05" width="4.95" height="4.95"/><rect x="1796.16" y="103.05" width="4.95" height="4.95"/><rect x="1825.14" y="103.05" width="4.95" height="4.95"/><rect x="1834.80" y="103.05" width="4.95" height="4.95"/><rect x="1781.67" y="107.88" width="4.95" height="4.95"/><rect x="1791.33" y="107.88" width="4.95" height="4.95"/><rect x="1829.97" y="107.88" width="4.95" height="4.95"/><rect x="1781.67" y="112.71" width="4.95" height="4.95"/><rect x="1786.50" y="112.71" width="4.95" height="4.95"/></g>
 <!-- brick -->
 <rect x="1884" y="77" width="51.5" height="32" rx="2" fill="#34495e"/>
 <rect x="1891.5" y="69.6" width="13.5" height="10" rx="2" fill="#34495e"/>
 <rect x="1913.5" y="69.6" width="15" height="10" rx="2" fill="#34495e"/>
 <!-- add user -->
 <circle cx="2010.7" cy="75.4" r="12" fill="none" stroke="#34495e" stroke-width="2.2"/>
 <path d="M1991 119 V110 C1991 98 2000 91 2011 91 C2019 91 2026 95 2029 103 M1991 119 H2021" fill="none" stroke="#34495e" stroke-width="2.2"/>
 <circle cx="2039.2" cy="117" r="13.3" fill="#34495e"/>
 <path d="M2039.2 109 V125 M2031.2 117 H2047.2" stroke="#fff" stroke-width="2.8"/>
 <!-- avatar -->
 <circle cx="2110.9" cy="86.5" r="45" fill="#4a84d8"/>
 <g clip-path="url(#avclip)" filter="url(#avblur)" fill="#e8eef8">
  <circle cx="2110.9" cy="77.5" r="20"/>
  <ellipse cx="2110.9" cy="133" rx="30" ry="33"/>
 </g>
 <!-- toolbar -->
 <rect x="0" y="136" width="2160" height="96.5" fill="#f0f0f3"/>
 <rect x="0" y="136" width="2160" height="6" fill="url(#hsh)"/>
 <rect x="0" y="231.5" width="2160" height="1.5" fill="#dde1e6"/>
 <g fill="#d9dee3"><rect x="384.3" y="136" width="1.5" height="96"/><rect x="578.2" y="136" width="1.5" height="96"/><rect x="914" y="136" width="1.5" height="96"/><rect x="1012.2" y="136" width="1.5" height="96"/><rect x="1110.4" y="136" width="1.5" height="96"/><rect x="1304.4" y="136" width="1.5" height="96"/><rect x="1594" y="136" width="1.5" height="96"/></g>
 <!-- copy -->
 <g fill="none" stroke="#c5d0da" stroke-width="2">
  <path d="M36 195.3 H25.3 V161.3 H58.3 V173"/>
  <rect x="37" y="173" width="34" height="33.3"/>
 </g>
 <!-- paste -->
 <g fill="none" stroke="#263238" stroke-width="2.2">
  <path d="M140 202 V206.3 H121.5 V166 H153 V178"/>
  <rect x="140" y="178.5" width="22.3" height="21.5"/>
 </g>
 <path d="M128.5 166.5 H149 L145.5 171.5 H132 Z" fill="#263238"/>
 <rect x="134.5" y="160.3" width="8" height="8" rx="1.5" fill="none" stroke="#263238" stroke-width="2.2"/>
 <!-- duplicate -->
 <g fill="none" stroke="#263238" stroke-linejoin="round" stroke-linecap="round">
  <rect x="233" y="162.3" width="31.5" height="31.5" rx="1.5" stroke-width="4"/>
  <path d="M230.5 172.2 L221.5 173.4 L225.8 202.8 L254.2 199.5 L253.8 196.5" stroke-width="3.4"/>
  <path d="M220 184 L214.2 184.8 L219.8 211 L246.8 206.2 L246.3 202" stroke-width="2.3"/>
 </g>
 <!-- trash -->
 <g fill="none" stroke="#c5d0da" stroke-linecap="round">
  <path d="M317 164.8 H355" stroke-width="4"/>
  <path d="M330.5 163 V159.5 Q330.5 156.3 333.7 156.3 H339.3 Q342.5 156.3 342.5 159.5 V163" stroke-width="2.6"/>
  <path d="M318 172 V201.5 Q318 208.5 325 208.5 H347 Q354 208.5 354 201.5 V172" stroke-width="4"/>
  <path d="M327.3 174 V203 M336 174 V203 M344.6 174 V203" stroke-width="2"/>
 </g>
 <!-- undo redo -->
 <path d="M413.9 183 L431.7 169.6 V178.5 C445 178.5 455 184 456 196 C451 190 443 188.5 431.7 188.5 V196 Z" fill="#263238"/>
 <path d="M550.8 183 L533 169.6 V178.5 C519.7 178.5 509.7 184 508.7 196 C513.7 190 521.7 188.5 533 188.5 V196 Z" fill="#c5d0da"/>
 <!-- eye bubble -->
 <path d="M950 161.5 H977.5 Q986.5 161.5 986.5 170.5 V196 Q986.5 205 977.5 205 H970.5 L963.8 213.5 L957 205 H950 Q941 205 941 196 V170.5 Q941 161.5 950 161.5 Z" fill="none" stroke="#263238" stroke-width="2.8" stroke-linejoin="round"/>
 <path d="M946.5 183.3 Q963.8 165 981 183.3 Q963.8 201.5 946.5 183.3 Z" fill="#263238"/>
 <circle cx="963.8" cy="183.3" r="5.6" fill="#f0f0f3"/>
 <!-- disabled icons -->
 <g fill="none" stroke="#c5d0da" stroke-width="3.2" stroke-linecap="round" stroke-linejoin="round">
  <path d="M1055 199 V193 C1055 188 1045 182 1045 171 C1045 162 1052 157.8 1062 157.8 C1072 157.8 1079.5 162 1079.5 171 C1079.5 182 1069.5 188 1069.5 193 V199 Z"/>
  <path d="M1056 204 H1068 M1058 210.5 H1066" stroke-width="2.6"/>
  <path d="M1054 168 Q1055.5 164.5 1059 163.5" stroke-width="1.8"/>
  <path d="M1137.8 163.6 H1175.5 V169.1 A23.8 23.8 0 1 1 1142.3 201.8 H1137.8 Z"/>
  <path d="M1236.3 163.6 H1274.5 V175 M1252 204.5 H1236.3 V163.6"/>
  <circle cx="1265.5" cy="193.5" r="17.5"/>
  <path d="M1337 158.8 V209" stroke-width="3.4"/>
  <rect x="1346.5" y="165" width="28" height="14" rx="2"/>
  <rect x="1346.5" y="188" width="20" height="14" rx="2" fill="#dfe3e7"/>
  <path d="M1449.5 156 V213.5" stroke-width="4"/>
  <path d="M1440.5 165.5 V201 H1421 Z" stroke-width="2.6"/>
  <path d="M1458.5 166 V201 H1478.5 Z" fill="#dfe4e9" stroke-width="4"/>
 </g>
 <g fill="none" stroke="#c5d0da" stroke-linecap="round" stroke-linejoin="round">
  <path d="M1530 200 L1521 177 C1516 164 1524 156.5 1535 156 C1546 155.5 1550 161 1556 174 L1564 190 L1555 194 L1546 175 C1543 168 1539 165 1535 166.5 C1530 168 1529 173 1532 180 L1539 197 Z" stroke-width="3.2"/>
  <path d="M1526 190 L1535 186 M1549 182 L1558 178" stroke-width="3"/>
  <path d="M1518.5 204 Q1523 210 1530 208 Q1546 199 1557 199 Q1566 200 1573 206" stroke-width="3.4" stroke-dasharray="2.6 5"/>
 </g>
 <!-- buttons -->
 <g fill="none" stroke="#d5dae0" stroke-width="1.6">
  <rect x="1621" y="153" width="162" height="62" rx="5"/>
  <rect x="1797.2" y="153" width="162" height="62" rx="5"/>
  <rect x="1973.3" y="153" width="162" height="62" rx="5"/>
 </g>
 <g font-size="28" fill="#34495e">
  <text x="1656" y="194" textLength="91" lengthAdjust="spacing">Import</text>
  <text x="1834.5" y="194" textLength="86" lengthAdjust="spacing">Export</text>
  <text x="2002" y="194" textLength="103" lengthAdjust="spacing">Send To</text>
 </g>

 <!-- view cube -->
 <polygon points="68.3,286.7 175,282.2 195.6,366.7 65.6,373.9" fill="#fff" fill-opacity="0.42" stroke="#a3a3a3" stroke-width="1.6" stroke-linejoin="round"/>
 <polygon points="65.6,373.9 195.6,366.7 181.1,427.8 80,436.7" fill="url(#cubeg)" stroke="#a3a3a3" stroke-width="1.6" stroke-linejoin="round"/>
 <text transform="translate(125.6 315.5) rotate(182)" font-size="19" font-weight="bold" fill="#7d8890" stroke="#7d8890" stroke-width="0.6" text-anchor="middle" textLength="48" lengthAdjust="spacingAndGlyphs">TOP</text>
 <text transform="translate(130 410.5) rotate(-3)" font-size="17" font-weight="bold" fill="#7d8890" stroke="#7d8890" stroke-width="0.5" text-anchor="middle" textLength="60" lengthAdjust="spacingAndGlyphs">BACK</text>

 <!-- nav circles -->
 <g fill="#fff" fill-opacity="0.25" stroke="#8e9397" stroke-width="1.8">
  <circle cx="62" cy="535.5" r="41"/><circle cx="62" cy="639.5" r="41"/><circle cx="62" cy="743.9" r="41"/><circle cx="62" cy="848.2" r="41"/><circle cx="62" cy="951.9" r="41"/>
 </g>
 <g fill="none" stroke="#9ca2a6" stroke-width="3" stroke-linejoin="miter">
  <path d="M43 532.5 L61.5 516.5 L80 532.5 H73.5 V553.5 H65.5 V541 H57.5 V553.5 H49.5 V532.5 Z" stroke-width="2.6"/>
  <path d="M44 630 V622.5 H51.5 M72.5 622.5 H80 V630 M80 648.5 V656 H72.5 M51.5 656 H44 V648.5" stroke-width="2.6"/>
  <path d="M46 743.9 H78 M62 727.9 V759.9" stroke-width="3.2" stroke-linecap="round"/>
  <path d="M44.5 848.2 H79.5" stroke-width="3.2" stroke-linecap="round"/>
  <path d="M49.5 935 L61.5 928.5 L74 935 V952 L61.5 959 L49.5 952 Z M49.5 935 L61.5 941 L74 935 M61.5 941 V971" stroke-width="2.2"/>
  <path d="M37.5 949.5 L61.5 971 L85 949.5" stroke-width="2.4"/>
 </g>
 <!-- bottom circle -->
 <clipPath id="bcclip"><circle cx="120" cy="1499.3" r="99.3"/></clipPath>
 <circle cx="120" cy="1499.3" r="99.3" fill="#fff" fill-opacity="0.2"/>
 <path d="M20.7 1499.3 A99.3 99.3 0 1 0 219.3 1499.3 A99.3 99.3 0 1 0 20.7 1499.3 Z M13.7 1487.3 A99.3 99.3 0 1 1 212.3 1487.3 A99.3 99.3 0 1 1 13.7 1487.3 Z" fill="#d5dbe3" fill-opacity="0.6" fill-rule="evenodd" clip-path="url(#bcclip)"/>
 <circle cx="120" cy="1499.3" r="99.3" fill="none" stroke="#8cc4de" stroke-width="1.6"/>
 <!-- right tab -->
 <rect x="2110.8" y="866" width="48" height="122" fill="#f3f4f6" stroke="#d5d9de" stroke-width="1.6"/>
 <path d="M2140.5 902.5 L2127.8 927 L2140.5 951" fill="none" stroke="#555" stroke-width="2.2" stroke-linecap="round"/>

 <!-- settings / snap grid -->
 <rect x="1947.8" y="1455.8" width="177" height="60" rx="5" fill="#fff" fill-opacity="0.55" stroke="#dfe3e6" stroke-width="1.5"/>
 <text x="1972.5" y="1496.4" font-size="32" textLength="126" lengthAdjust="spacing" fill="#607a90">Settings</text>
 <text x="1758" y="1578" font-size="32" textLength="144" lengthAdjust="spacing" fill="#34495e">Snap Grid</text>
 <rect x="1933.8" y="1540.3" width="191" height="56" rx="4" fill="#fff" fill-opacity="0.55" stroke="#d6dadd" stroke-width="1.5"/>
 <text x="1950.5" y="1580" font-size="32" textLength="105" lengthAdjust="spacing" fill="#555e63">1.0 mm</text>
 <path d="M2094.9 1572.2 L2100.7 1565.4 L2106.5 1572.2 Z" fill="#3c4246"/>
</svg>
</body></html>
